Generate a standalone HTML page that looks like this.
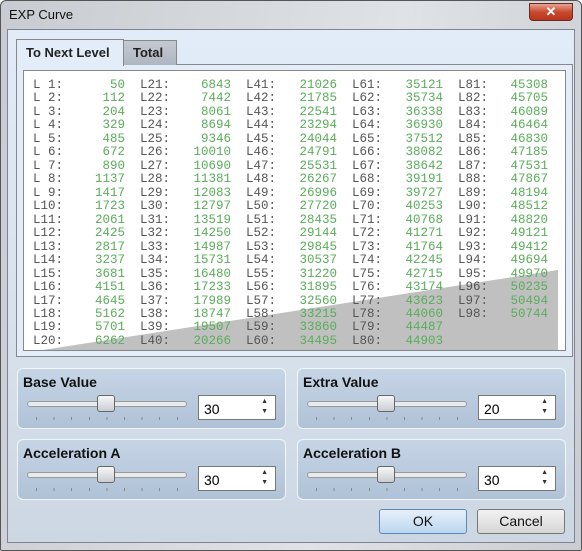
<!DOCTYPE html>
<html><head><meta charset="utf-8"><style>
*{margin:0;padding:0;box-sizing:border-box}
body{width:582px;height:551px;overflow:hidden;background:#fff;font-family:"Liberation Sans",sans-serif;position:relative}
.win{position:absolute;left:0;top:0;width:582px;height:551px;border:1px solid #555;border-radius:6px 6px 2px 2px;background:linear-gradient(100deg,#c8ccd2,#dfe2e6 60%,#c9cdd3)}
.title{position:absolute;left:8px;top:6px;font-size:13px;color:#111}
.close{position:absolute;left:528px;top:2px;width:44px;height:18px;border:1px solid #6b2a20;border-radius:0 0 4px 4px;background:linear-gradient(#e8a493,#c9492f 50%,#b8351c);color:#fff;font-weight:bold;font-size:13px;text-align:center;line-height:16px}
.client{position:absolute;left:7px;top:29px;width:568px;height:514px;border:1px solid #7e8590;background:linear-gradient(#e2ecf8,#d7e1ec 60%,#ccd7e3)}
.tab{position:absolute;font-size:13px;font-weight:bold;color:#222}
.content{position:absolute;left:16px;top:64px;width:557px;height:293px;border:1px solid #888;background:#e3edfa}
.white{position:absolute;left:23px;top:70px;width:543px;height:281px;border:1px solid #888;background:#fff;overflow:hidden}
.col{position:absolute;top:8px;font-family:"Liberation Mono",monospace;font-size:12.5px;line-height:13.47px;white-space:pre}
.lab{color:#555}.num{color:#5aad5a;text-align:right}
.grp{position:absolute;width:269px;height:61px;border:1px solid #f2f6fa;border-radius:6px;background:linear-gradient(#c6d5e6,#b0c2d7)}
.grp b{position:absolute;left:5px;top:5px;font-size:14px;color:#111}
.track{position:absolute;left:9px;top:32px;width:160px;height:6px;border:1px solid #999;border-radius:3px;background:#e8eaec}
.thumb{position:absolute;left:79px;top:26px;width:18px;height:17px;border:1px solid #666;border-radius:3px;background:linear-gradient(#f6f7f8,#c9cdd2)}
.ticks{position:absolute;left:18px;top:48px;width:142px;height:3px;background:repeating-linear-gradient(90deg,#888 0 1px,transparent 1px 17.6px)}
.spin{position:absolute;left:180px;top:26px;width:78px;height:25px;border:1px solid #777;background:#fff;font-size:14px;padding:5px 0 0 5px}
.spin i{position:absolute;right:7px;font-style:normal;font-size:7px;color:#333}
.btn{position:absolute;top:509px;height:25px;border:1px solid #777;border-radius:3px;font-size:14px;text-align:center;line-height:23px;color:#111}
</style></head><body>
<div class="win">
<div class="title">EXP Curve</div>
<div class="close">✕</div>
</div>
<div class="client"></div>
<div class="content"></div>
<div style="position:absolute;left:123px;top:40px;width:54px;height:25px;border:1px solid #888;border-bottom:none;background:linear-gradient(#c4cad2,#aeb6c0)"></div>
<div class="tab" style="left:133px;top:45px">Total</div>
<div style="position:absolute;left:16px;top:39px;width:108px;height:27px;border:1px solid #888;border-bottom:none;background:#e3edfa"></div>
<div class="tab" style="left:26px;top:45px">To Next Level</div>
<div class="white">
<svg style="position:absolute;left:0;top:0" width="543" height="281"><polygon points="19,279 534,199 534,281 19,281" fill="#c0c0c0"/></svg>
<div class="col lab" style="left:9px">L 1:
L 2:
L 3:
L 4:
L 5:
L 6:
L 7:
L 8:
L 9:
L10:
L11:
L12:
L13:
L14:
L15:
L16:
L17:
L18:
L19:
L20:</div>
<div class="col num" style="left:60px;width:41px">50
112
204
329
485
672
890
1137
1417
1723
2061
2425
2817
3237
3681
4151
4645
5162
5701
6262</div>
<div class="col lab" style="left:116px">L21:
L22:
L23:
L24:
L25:
L26:
L27:
L28:
L29:
L30:
L31:
L32:
L33:
L34:
L35:
L36:
L37:
L38:
L39:
L40:</div>
<div class="col num" style="left:160px;width:47px">6843
7442
8061
8694
9346
10010
10690
11381
12083
12797
13519
14250
14987
15731
16480
17233
17989
18747
19507
20266</div>
<div class="col lab" style="left:222px">L41:
L42:
L43:
L44:
L45:
L46:
L47:
L48:
L49:
L50:
L51:
L52:
L53:
L54:
L55:
L56:
L57:
L58:
L59:
L60:</div>
<div class="col num" style="left:266px;width:47px">21026
21785
22541
23294
24044
24791
25531
26267
26996
27720
28435
29144
29845
30537
31220
31895
32560
33215
33860
34495</div>
<div class="col lab" style="left:328px">L61:
L62:
L63:
L64:
L65:
L66:
L67:
L68:
L69:
L70:
L71:
L72:
L73:
L74:
L75:
L76:
L77:
L78:
L79:
L80:</div>
<div class="col num" style="left:372px;width:47px">35121
35734
36338
36930
37512
38082
38642
39191
39727
40253
40768
41271
41764
42245
42715
43174
43623
44060
44487
44903</div>
<div class="col lab" style="left:434px">L81:
L82:
L83:
L84:
L85:
L86:
L87:
L88:
L89:
L90:
L91:
L92:
L93:
L94:
L95:
L96:
L97:
L98:</div>
<div class="col num" style="left:477px;width:47px">45308
45705
46089
46464
46830
47185
47531
47867
48194
48512
48820
49121
49412
49694
49970
50235
50494
50744</div>
</div>

<div class="grp" style="left:17px;top:368px"><b>Base Value</b><div class="track"></div><div class="ticks"></div><div class="thumb"></div><div class="spin">30<i style="top:2px">▲</i><i style="top:12px">▼</i></div></div>
<div class="grp" style="left:297px;top:368px"><b>Extra Value</b><div class="track"></div><div class="ticks"></div><div class="thumb"></div><div class="spin">20<i style="top:2px">▲</i><i style="top:12px">▼</i></div></div>
<div class="grp" style="left:17px;top:439px"><b>Acceleration A</b><div class="track"></div><div class="ticks"></div><div class="thumb"></div><div class="spin">30<i style="top:2px">▲</i><i style="top:12px">▼</i></div></div>
<div class="grp" style="left:297px;top:439px"><b>Acceleration B</b><div class="track"></div><div class="ticks"></div><div class="thumb"></div><div class="spin">30<i style="top:2px">▲</i><i style="top:12px">▼</i></div></div>

<div class="btn" style="left:379px;width:88px;border-color:#5c8ab8;background:linear-gradient(#e6f1fb,#bcd6ef)">OK</div>
<div class="btn" style="left:477px;width:88px;background:linear-gradient(#f2f2f2,#d6d6d6)">Cancel</div>
</body></html>
